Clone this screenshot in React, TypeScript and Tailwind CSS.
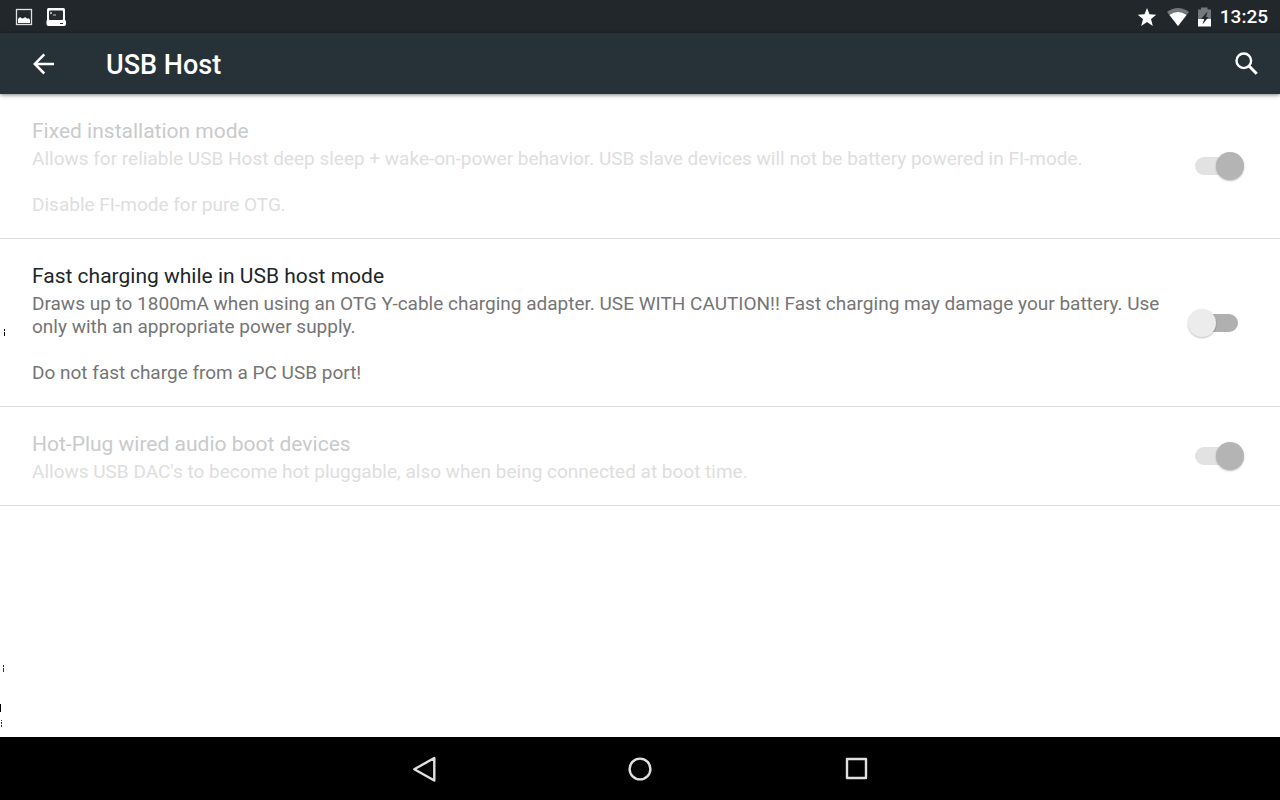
import { useState } from 'react'

const SETTINGS = [
  {
    id: 'fixed-install',
    title: 'Fixed installation mode',
    summary: [
      'Allows for reliable USB Host deep sleep + wake-on-power behavior. USB slave devices will not be battery powered in FI-mode.',
      'Disable FI-mode for pure OTG.',
    ],
    on: true,
    disabled: true,
  },
  {
    id: 'fast-charge',
    title: 'Fast charging while in USB host mode',
    summary: [
      'Draws up to 1800mA when using an OTG Y-cable charging adapter. USE WITH CAUTION!! Fast charging may damage your battery. Use only with an appropriate power supply.',
      'Do not fast charge from a PC USB port!',
    ],
    on: false,
    disabled: false,
  },
  {
    id: 'hot-plug',
    title: 'Hot-Plug wired audio boot devices',
    summary: ["Allows USB DAC's to become hot pluggable, also when being connected at boot time."],
    on: true,
    disabled: true,
  },
]

function StatusBar() {
  return (
    <div className="flex h-[33px] items-center justify-between bg-[#21272b] pr-3 pl-[15px] text-white">
      <div className="flex items-center gap-[13px]">
        <svg width="18" height="18" viewBox="0 0 18 18">
          <rect x="1.500" y="1.500" width="15" height="15" fill="none" stroke="#dfe1e2" strokeWidth="1.300" />
          <path d="M3 15v-4l1-1 1-1 2 1.500L9 10l1-1 2 1.500h2l1 1.500v3z" fill="#fff" />
        </svg>
        <svg width="20" height="18" viewBox="0 0 20 18">
          <path d="M2.500 0h15q1.500 0 1.500 1.500V12l1 1v3q0 2-2 2H2.500q-2 0-2-2v-3l.5-1V1.500Q1 0 2.500 0z" fill="#fff" />
          <rect x="3" y="2.500" width="14" height="9.500" rx="1" fill="#252b2f" />
          <path d="M4 4l2 1-2 1M7 7h3" fill="none" stroke="#ccc" />
          <path d="M14 15.500h3" stroke="#252b2f" />
        </svg>
      </div>
      <div className="flex items-center gap-[9px]">
        <svg width="21" height="20" viewBox="0 0 21 20" fill="#fff">
          <path d="M10 1l2.500 6.300 6.800.4-5.300 4.400 1.800 6.900-5.800-3.900-5.800 3.900L6 12.100.7 7.700l6.800-.4z" />
        </svg>
        <svg width="22" height="18" viewBox="0 0 22 18">
          <path d="M11 18L0 4Q11-4 22 4z" fill="#74787a" />
          <path d="M11 18L2.500 7Q11 .8 19.500 7z" fill="#fff" />
        </svg>
        <svg width="13" height="20" viewBox="0 0 13 20">
          <path d="M0 2.500h3V.5h6.500v2H13v10H0z" fill="#74787a" />
          <path d="M0 12h13v7.500H0z" fill="#fff" />
          <path d="M9.500 4.500L3 12h3.200L4.500 17.500 10.500 10H8z" fill="#21272b" />
        </svg>
        <span className="text-[19px] leading-6 font-medium">13:25</span>
      </div>
    </div>
  )
}

function AppBar() {
  return (
    <header className="z-10 flex h-[61px] items-center bg-[#273238] pr-5 pl-8 text-white shadow-[0_1px_4px_rgba(0,0,0,0.5)]">
      <button type="button" aria-label="Back">
        <svg width="24" height="24" viewBox="0 0 24 24" fill="none" stroke="#fff" strokeWidth="2.500">
          <path d="M22 12H3M12.300 2.300L2.800 12l9.500 9.500" />
        </svg>
      </button>
      <h1 className="ml-[50px] flex-1 pt-[2px] text-[27px] leading-8 font-medium">USB Host</h1>
      <button type="button" aria-label="Search">
        <svg width="26" height="26" viewBox="0 0 26 26" fill="none" stroke="#fff">
          <circle cx="9.800" cy="9.800" r="7.300" strokeWidth="2.400" />
          <path d="M15 15l7.700 7.700" strokeWidth="3" />
        </svg>
      </button>
    </header>
  )
}

function SettingRow({ item }: { item: (typeof SETTINGS)[number] }) {
  const [on, setOn] = useState(item.on)

  return (
    <li className="flex items-center gap-6 border-b border-[#dcdcdc] py-[22px] pr-[42px] pl-8">
      <label htmlFor={item.id} className="flex-1">
        <span className={`block text-[21px] leading-[31px] ${item.disabled ? 'text-[#c9cacb]' : 'text-[#20262a]'}`}>
          {item.title}
        </span>
        <span className={`flex flex-col gap-[23px] text-[19px] leading-[23px] ${item.disabled ? 'text-[#dedede]' : 'text-[#757575]'}`}>
          {item.summary.map(line => (
            <span key={line}>{line}</span>
          ))}
        </span>
      </label>
      <input
        id={item.id}
        type="checkbox"
        role="switch"
        checked={on}
        disabled={item.disabled}
        onChange={e => setOn(e.target.checked)}
        className="flex h-[18px] w-[43px] shrink-0 appearance-none items-center rounded-full bg-[#b0b0b0] before:-ml-[7px] before:block before:size-7 before:shrink-0 before:rounded-full before:bg-[#ececec] before:shadow-[0_1px_2px_rgba(0,0,0,0.25)] checked:before:ml-[21px] disabled:bg-[#e2e2e2] disabled:before:bg-[#b4b4b4]"
      />
    </li>
  )
}

// stray pixels along the left edge of the display
function EdgeMarks() {
  return (
    <svg className="pointer-events-none absolute top-0 left-0" width="8" height="740" shapeRendering="crispEdges">
      <path d="M4 329h1v2h-1zM4 332h1v4h-1zM0 704h1v8h-1z" />
      <path d="M3 665h1v2h-1zM3 668h1v4h-1zM1 720h1v1h-1zM1 722h1v2h-1zM1 725h1v2h-1z" fill="#333" />
    </svg>
  )
}

function NavBar() {
  return (
    <nav className="flex h-[63px] items-center justify-center bg-black">
      <button type="button" aria-label="Back" className="flex w-[216px] justify-center">
        <svg width="26" height="26" viewBox="0 0 26 26" fill="none" stroke="#e0e0e0" strokeWidth="2.400" strokeLinejoin="round">
          <path d="M23.300 2v22.500L3.300 13.200z" />
        </svg>
      </button>
      <button type="button" aria-label="Home" className="flex w-[216px] justify-center">
        <svg width="26" height="26" viewBox="0 0 26 26" fill="none" stroke="#e0e0e0" strokeWidth="2.400">
          <circle cx="13" cy="13" r="10.400" />
        </svg>
      </button>
      <button type="button" aria-label="Recent apps" className="flex w-[216px] justify-center">
        <svg width="26" height="26" viewBox="0 0 26 26" fill="none" stroke="#e0e0e0" strokeWidth="2.400" strokeLinejoin="round">
          <rect x="4" y="3" width="19" height="19" />
        </svg>
      </button>
    </nav>
  )
}

export default function App() {
  return (
    <div className="relative flex min-h-screen flex-col bg-white font-['Roboto',sans-serif]">
      <StatusBar />
      <AppBar />
      <main className="flex-1">
        <ul>
          {SETTINGS.map(s => (
            <SettingRow key={s.id} item={s} />
          ))}
        </ul>
      </main>
      <NavBar />
      <EdgeMarks />
    </div>
  )
}
